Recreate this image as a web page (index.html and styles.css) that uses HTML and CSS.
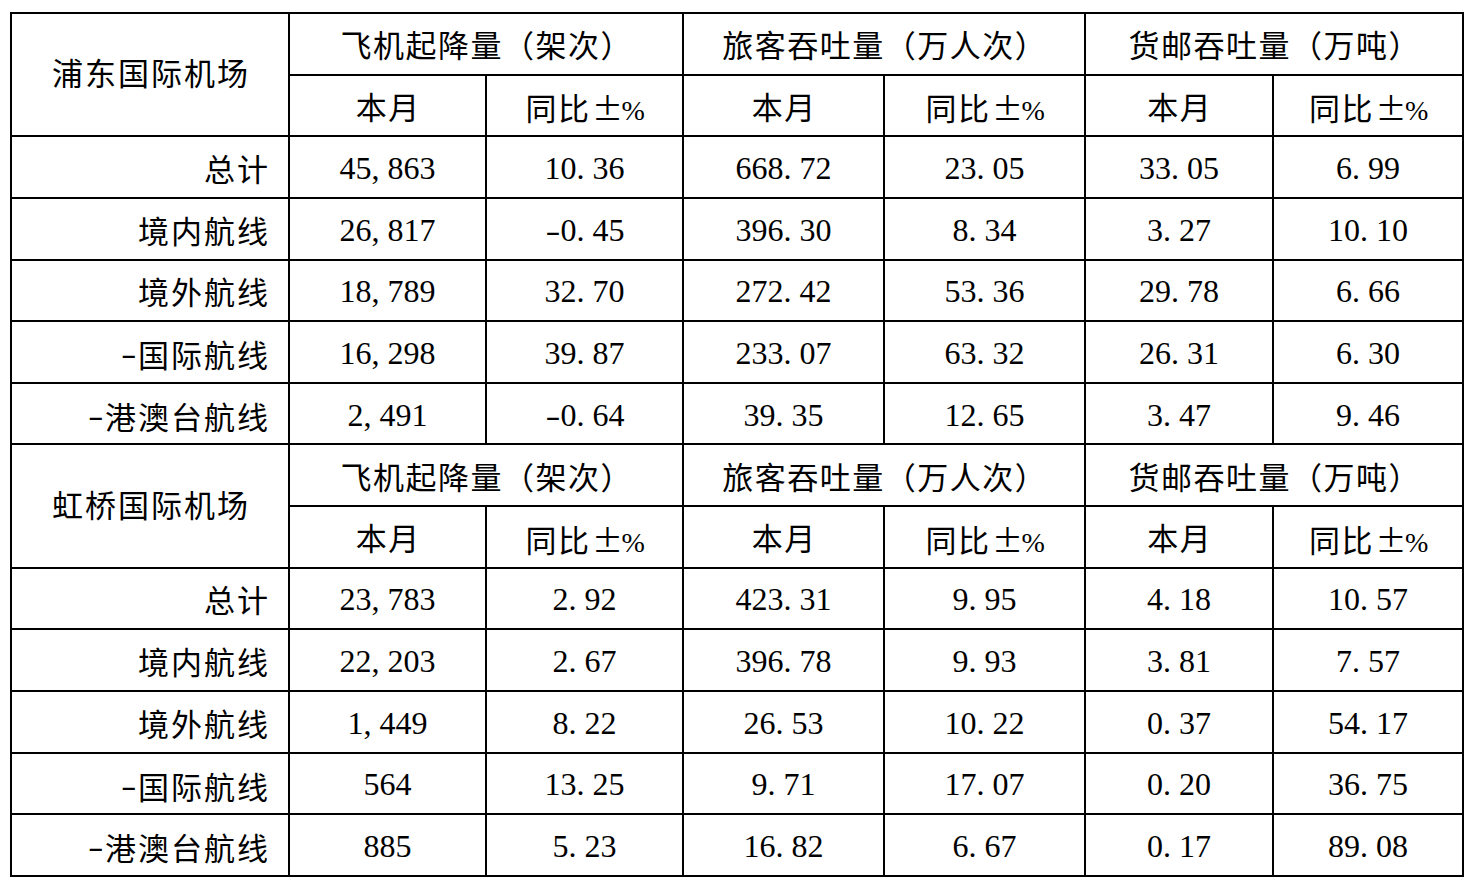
FILE: index.html
```html
<!DOCTYPE html>
<html lang="zh-CN">
<head>
<meta charset="utf-8">
<title>机场运输生产数据</title>
<link rel="stylesheet" href="styles.css">
</head>
<body>
<table class="stats">
  <colgroup>
    <col class="c0"><col class="c1"><col class="c2"><col class="c3"><col class="c4"><col class="c5"><col class="c6">
  </colgroup>
  <tbody>
    <tr>
      <td class="airport" rowspan="2">浦东国际机场</td>
      <td class="hd" colspan="2">飞机起降量（架次）</td>
      <td class="hd" colspan="2">旅客吞吐量（万人次）</td>
      <td class="hd" colspan="2">货邮吞吐量（万吨）</td>
    </tr>
    <tr>
      <td class="hd">本月</td><td class="hd">同比<span class="pm">±</span><span class="pc">%</span></td>
      <td class="hd">本月</td><td class="hd">同比<span class="pm">±</span><span class="pc">%</span></td>
      <td class="hd">本月</td><td class="hd">同比<span class="pm">±</span><span class="pc">%</span></td>
    </tr>
    <tr>
      <td class="lbl">总计</td>
      <td class="num">45<span class="pt">,</span>863</td><td class="num">10<span class="pt">.</span>36</td>
      <td class="num">668<span class="pt">.</span>72</td><td class="num">23<span class="pt">.</span>05</td>
      <td class="num">33<span class="pt">.</span>05</td><td class="num">6<span class="pt">.</span>99</td>
    </tr>
    <tr>
      <td class="lbl">境内航线</td>
      <td class="num">26<span class="pt">,</span>817</td><td class="num"><span class="neg">-</span>0<span class="pt">.</span>45</td>
      <td class="num">396<span class="pt">.</span>30</td><td class="num">8<span class="pt">.</span>34</td>
      <td class="num">3<span class="pt">.</span>27</td><td class="num">10<span class="pt">.</span>10</td>
    </tr>
    <tr>
      <td class="lbl">境外航线</td>
      <td class="num">18<span class="pt">,</span>789</td><td class="num">32<span class="pt">.</span>70</td>
      <td class="num">272<span class="pt">.</span>42</td><td class="num">53<span class="pt">.</span>36</td>
      <td class="num">29<span class="pt">.</span>78</td><td class="num">6<span class="pt">.</span>66</td>
    </tr>
    <tr>
      <td class="lbl"><span class="dash">-</span>国际航线</td>
      <td class="num">16<span class="pt">,</span>298</td><td class="num">39<span class="pt">.</span>87</td>
      <td class="num">233<span class="pt">.</span>07</td><td class="num">63<span class="pt">.</span>32</td>
      <td class="num">26<span class="pt">.</span>31</td><td class="num">6<span class="pt">.</span>30</td>
    </tr>
    <tr>
      <td class="lbl"><span class="dash">-</span>港澳台航线</td>
      <td class="num">2<span class="pt">,</span>491</td><td class="num"><span class="neg">-</span>0<span class="pt">.</span>64</td>
      <td class="num">39<span class="pt">.</span>35</td><td class="num">12<span class="pt">.</span>65</td>
      <td class="num">3<span class="pt">.</span>47</td><td class="num">9<span class="pt">.</span>46</td>
    </tr>
    <tr>
      <td class="airport" rowspan="2">虹桥国际机场</td>
      <td class="hd" colspan="2">飞机起降量（架次）</td>
      <td class="hd" colspan="2">旅客吞吐量（万人次）</td>
      <td class="hd" colspan="2">货邮吞吐量（万吨）</td>
    </tr>
    <tr>
      <td class="hd">本月</td><td class="hd">同比<span class="pm">±</span><span class="pc">%</span></td>
      <td class="hd">本月</td><td class="hd">同比<span class="pm">±</span><span class="pc">%</span></td>
      <td class="hd">本月</td><td class="hd">同比<span class="pm">±</span><span class="pc">%</span></td>
    </tr>
    <tr>
      <td class="lbl">总计</td>
      <td class="num">23<span class="pt">,</span>783</td><td class="num">2<span class="pt">.</span>92</td>
      <td class="num">423<span class="pt">.</span>31</td><td class="num">9<span class="pt">.</span>95</td>
      <td class="num">4<span class="pt">.</span>18</td><td class="num">10<span class="pt">.</span>57</td>
    </tr>
    <tr>
      <td class="lbl">境内航线</td>
      <td class="num">22<span class="pt">,</span>203</td><td class="num">2<span class="pt">.</span>67</td>
      <td class="num">396<span class="pt">.</span>78</td><td class="num">9<span class="pt">.</span>93</td>
      <td class="num">3<span class="pt">.</span>81</td><td class="num">7<span class="pt">.</span>57</td>
    </tr>
    <tr>
      <td class="lbl">境外航线</td>
      <td class="num">1<span class="pt">,</span>449</td><td class="num">8<span class="pt">.</span>22</td>
      <td class="num">26<span class="pt">.</span>53</td><td class="num">10<span class="pt">.</span>22</td>
      <td class="num">0<span class="pt">.</span>37</td><td class="num">54<span class="pt">.</span>17</td>
    </tr>
    <tr>
      <td class="lbl"><span class="dash">-</span>国际航线</td>
      <td class="num">564</td><td class="num">13<span class="pt">.</span>25</td>
      <td class="num">9<span class="pt">.</span>71</td><td class="num">17<span class="pt">.</span>07</td>
      <td class="num">0<span class="pt">.</span>20</td><td class="num">36<span class="pt">.</span>75</td>
    </tr>
    <tr>
      <td class="lbl"><span class="dash">-</span>港澳台航线</td>
      <td class="num">885</td><td class="num">5<span class="pt">.</span>23</td>
      <td class="num">16<span class="pt">.</span>82</td><td class="num">6<span class="pt">.</span>67</td>
      <td class="num">0<span class="pt">.</span>17</td><td class="num">89<span class="pt">.</span>08</td>
    </tr>
  </tbody>
</table>
</body>
</html>
```

FILE: styles.css
```css
html, body {
  margin: 0;
  padding: 0;
  background: #ffffff;
}

body {
  padding: 12px 0 0 10px;
  font-family: "Liberation Serif", "Noto Sans CJK SC", serif;
  color: #000000;
}

.stats {
  border-collapse: collapse;
  table-layout: fixed;
  width: 1452px;
}

.c0 { width: 278px; }
.c1 { width: 197px; }
.c2 { width: 197px; }
.c3 { width: 201px; }
.c4 { width: 201px; }
.c5 { width: 188px; }
.c6 { width: 190px; }

.stats td {
  border: 2px solid #000000;
  height: 61.64px;
  padding: 0;
  box-sizing: border-box;
  text-align: center;
  vertical-align: middle;
  white-space: nowrap;
  font-size: 31px;
  line-height: 1;
  font-weight: 400;
}

.stats td.hd {
  padding-top: 6px;
  letter-spacing: 1.5px;
  text-indent: 1.5px;
}

.stats td.airport {
  letter-spacing: 2px;
  text-indent: 2px;
}

.stats td.lbl {
  text-align: right;
  padding-right: 18px;
  padding-top: 7px;
  letter-spacing: 2px;
}

.stats td.num {
  font-size: 32px;
  padding-top: 2px;
  letter-spacing: 0;
}

.pm {
  font-family: "Noto Sans CJK SC", sans-serif;
  font-feature-settings: "fwid" 1;
  display: inline-block;
  width: 1em;
  text-align: center;
  letter-spacing: 0;
}

.pc {
  letter-spacing: 0;
  font-size: 28px;
}

.pt {
  display: inline-block;
  width: 0.5em;
  text-align: left;
}

.neg {
  display: inline-block;
  width: 0.5em;
  text-align: center;
  transform: scaleX(1.4);
}

.dash {
  font-family: "Liberation Serif", serif;
  display: inline-block;
  width: 0.55em;
  text-align: left;
  letter-spacing: 0;
  vertical-align: 3px;
  transform: scaleX(1.5);
  transform-origin: left center;
}
```
